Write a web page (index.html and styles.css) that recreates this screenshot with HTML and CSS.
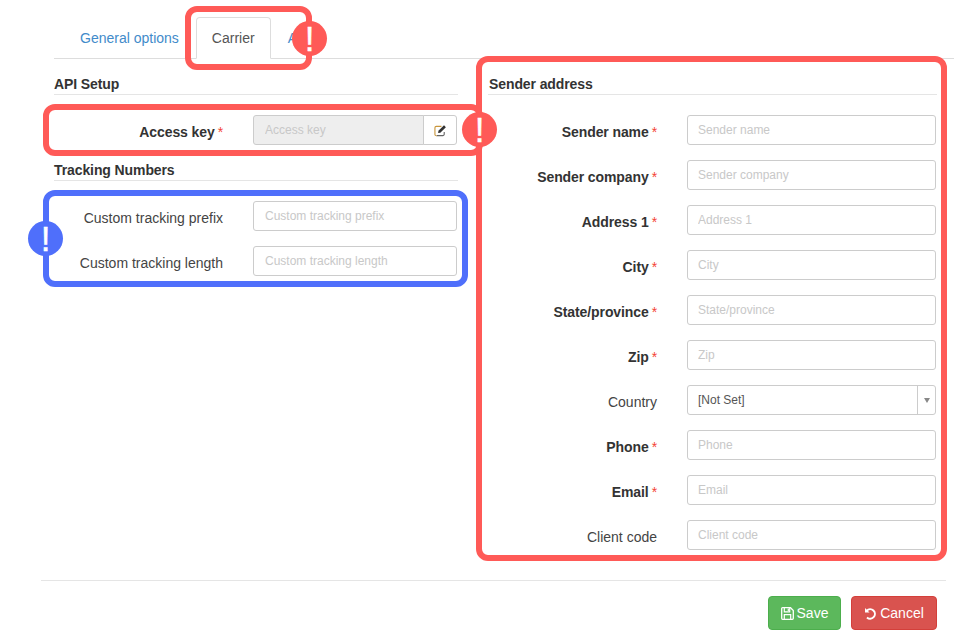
FILE: index.html
```html
<!DOCTYPE html>
<html lang="en">
<head>
<meta charset="utf-8">
<title>Carrier settings</title>
<link rel="stylesheet" href="styles.css">
</head>
<body>
<div class="page">
  <div class="tabs">
    <a class="tab">General options</a>
    <a class="tab active">Carrier</a>
    <a class="tab">A</a>
  </div>
  <div class="columns">
    <div class="col left">
      <h4 class="heading">API Setup</h4>
      <div class="rows">
        <div class="row">
          <label class="label req">Access key<span class="star">*</span></label>
          <div class="group">
            <input class="input disabled" placeholder="Access key" disabled>
            <button class="addon" type="button">
              <svg viewBox="0 0 14 14" width="13" height="13"><path d="M11 8.500V11a1.500 1.500 0 0 1-1.500 1.500H3" fill="none" stroke="#666" stroke-width="1.200"/><path d="M3 12.500A1.500 1.500 0 0 1 1 11V4a1.500 1.500 0 0 1 1.500-1.500H8" fill="none" stroke="#c9963c" stroke-width="1.200"/><path d="M4.800 7.400 10.800 1.400l2 2L6.800 9.400l-2.400.4z" fill="#333"/></svg>
            </button>
          </div>
        </div>
      </div>
      <h4 class="heading">Tracking Numbers</h4>
      <div class="rows">
        <div class="row"><label class="label">Custom tracking prefix</label><input class="input" placeholder="Custom tracking prefix"></div>
        <div class="row"><label class="label">Custom tracking length</label><input class="input" placeholder="Custom tracking length"></div>
      </div>
    </div>
    <div class="col right">
      <h4 class="heading">Sender address</h4>
      <div class="rows">
        <div class="row"><label class="label req">Sender name<span class="star">*</span></label><input class="input" placeholder="Sender name"></div>
        <div class="row"><label class="label req">Sender company<span class="star">*</span></label><input class="input" placeholder="Sender company"></div>
        <div class="row"><label class="label req">Address 1<span class="star">*</span></label><input class="input" placeholder="Address 1"></div>
        <div class="row"><label class="label req">City<span class="star">*</span></label><input class="input" placeholder="City"></div>
        <div class="row"><label class="label req">State/province<span class="star">*</span></label><input class="input" placeholder="State/province"></div>
        <div class="row"><label class="label req">Zip<span class="star">*</span></label><input class="input" placeholder="Zip"></div>
        <div class="row">
          <label class="label">Country</label>
          <div class="select"><span class="select-value">[Not Set]</span><span class="select-arrow"></span></div>
        </div>
        <div class="row"><label class="label req">Phone<span class="star">*</span></label><input class="input" placeholder="Phone"></div>
        <div class="row"><label class="label req">Email<span class="star">*</span></label><input class="input" placeholder="Email"></div>
        <div class="row"><label class="label">Client code</label><input class="input" placeholder="Client code"></div>
      </div>
    </div>
  </div>
  <div class="footer">
    <button class="btn save" type="button">
      <svg viewBox="0 0 13 13" width="13" height="13"><path d="M1.500.7h8L12.300 3.500v7.800a1 1 0 0 1-1 1H1.700a1 1 0 0 1-1-1V1.500a.8.8 0 0 1 .8-.8z" fill="none" stroke="#fff" stroke-width="1.300"/><path d="M3.300 1v3.800h5.400V1M3.300 12V7.600h6.400V12" fill="none" stroke="#fff" stroke-width="1.200"/><path d="M6.700 1.500h1.200v2.500H6.700z" fill="#fff"/></svg>
      Save
    </button>
    <button class="btn cancel" type="button">
      <svg viewBox="0 0 13 13" width="13" height="13"><path d="M1 1v4.500h4.500z" fill="#fff"/><path d="M2.800 3.700A4.700 4.700 0 1 1 3 10.400" fill="none" stroke="#fff" stroke-width="2"/></svg>
      Cancel
    </button>
  </div>

  <div class="frame red frame-tab"></div>
  <div class="frame red frame-key"></div>
  <div class="frame blue frame-track"></div>
  <div class="frame red frame-sender"></div>
  <span class="badge red-bg badge-tab">!</span>
  <span class="badge red-bg badge-key">!</span>
  <span class="badge blue-bg badge-track">!</span>
</div>
</body>
</html>
```

FILE: styles.css
```css
* { box-sizing: border-box; }
html, body { margin: 0; height: 100%; background: #fff; }
body { font-family: "Liberation Sans", Arial, sans-serif; font-size: 14px; color: #333; }
.page { position: relative; width: 954px; height: 640px; padding-top: 17px; overflow: hidden; }

.tabs { display: flex; height: 42px; margin-left: 54px; border-bottom: 1px solid #ddd; padding-left: 10px; }
.tab { display: block; height: 42px; padding: 0 15px; line-height: 41px; color: #428bca; border: 1px solid transparent; }
.tab + .tab { margin-left: 1px; }
.tab.active { color: #555; background: #fff; border-color: #ddd #ddd #fff; border-radius: 4px 4px 0 0; }

.columns { display: flex; margin-left: 54px; }
.left { width: 404px; }
.right { width: 449px; margin-left: 30px; }
.heading { height: 36px; margin: 0 0 20px; padding-top: 17px; border-bottom: 1px solid #e5e5e5; font-size: 14px; line-height: 16px; font-weight: 700; letter-spacing: -.1px; color: #333; }
.right .heading { padding-left: 1px; }
.rows { display: flex; flex-direction: column; gap: 15px; }
.row { display: flex; height: 30px; }
.label { flex: none; width: 199px; padding: 6px 30px 0 0; text-align: right; line-height: 22px; color: #444; }
.label.req { font-weight: 700; letter-spacing: -.1px; color: #333; }
.star { margin-left: 3px; color: #f44336; font-weight: 400; }

.input { display: block; width: 204px; height: 30px; padding: 0 11px; border: 1px solid #ccc; border-radius: 3px; background: #fff; font: 12px "Liberation Sans", Arial, sans-serif; color: #555; outline: none; }
.right .input { width: 249px; padding: 0 10px; }
.input::placeholder { color: #c8c8c8; opacity: 1; }
.group { display: flex; width: 204px; }
.input.disabled { flex: 1; width: auto; min-width: 0; background: #eee; border-radius: 3px 0 0 3px; }
.addon { width: 34px; height: 30px; margin-left: -1px; padding: 0; display: flex; align-items: center; justify-content: center; border: 1px solid #ccc; border-radius: 0 3px 3px 0; background: #fff; }

.select { display: flex; width: 249px; height: 30px; border: 1px solid #ccc; border-radius: 3px; font-size: 12px; color: #555; }
.select-value { flex: 1; padding-left: 10px; line-height: 28px; }
.select-arrow { position: relative; width: 18px; border-left: 1px solid #ccc; }
.select-arrow::after { content: ""; position: absolute; left: 6px; top: 12px; border: 3px solid transparent; border-top: 5px solid #888; border-bottom: 0; }

.footer { display: flex; justify-content: flex-end; gap: 10px; width: 905px; margin: 30px 0 0 41px; padding: 15px 9px 0 0; border-top: 1px solid #e5e5e5; }
.btn { display: flex; align-items: center; justify-content: center; gap: 3px; height: 34px; padding: 0; border: 1px solid; border-radius: 4px; color: #fff; font: 14px "Liberation Sans", Arial, sans-serif; }
.save { width: 73px; background: #5cb85c; border-color: #4cae4c; }
.cancel { width: 86px; background: #d9534f; border-color: #d43f3a; }

.frame { position: absolute; border: 6px solid; border-radius: 12px; pointer-events: none; }
.red { border-color: #ff5a57; }
.blue { border-color: #4f6ffb; }
.frame-tab { left: 185px; top: 6px; width: 127px; height: 64px; }
.frame-key { left: 43px; top: 104px; width: 440px; height: 52px; }
.frame-track { left: 43px; top: 190px; width: 425px; height: 97px; }
.frame-sender { left: 476px; top: 56px; width: 471px; height: 505px; }

.badge { position: absolute; width: 35px; height: 35px; border-radius: 50%; color: #fff; font-size: 35px; font-weight: 400; line-height: 35px; text-align: center; -webkit-text-stroke: .4px #fff; }
.red-bg { background: #ff5a57; }
.blue-bg { background: #4f6ffb; }
.badge-tab { left: 292px; top: 21px; }
.badge-key { left: 462px; top: 112px; }
.badge-track { left: 28px; top: 221px; }
```
